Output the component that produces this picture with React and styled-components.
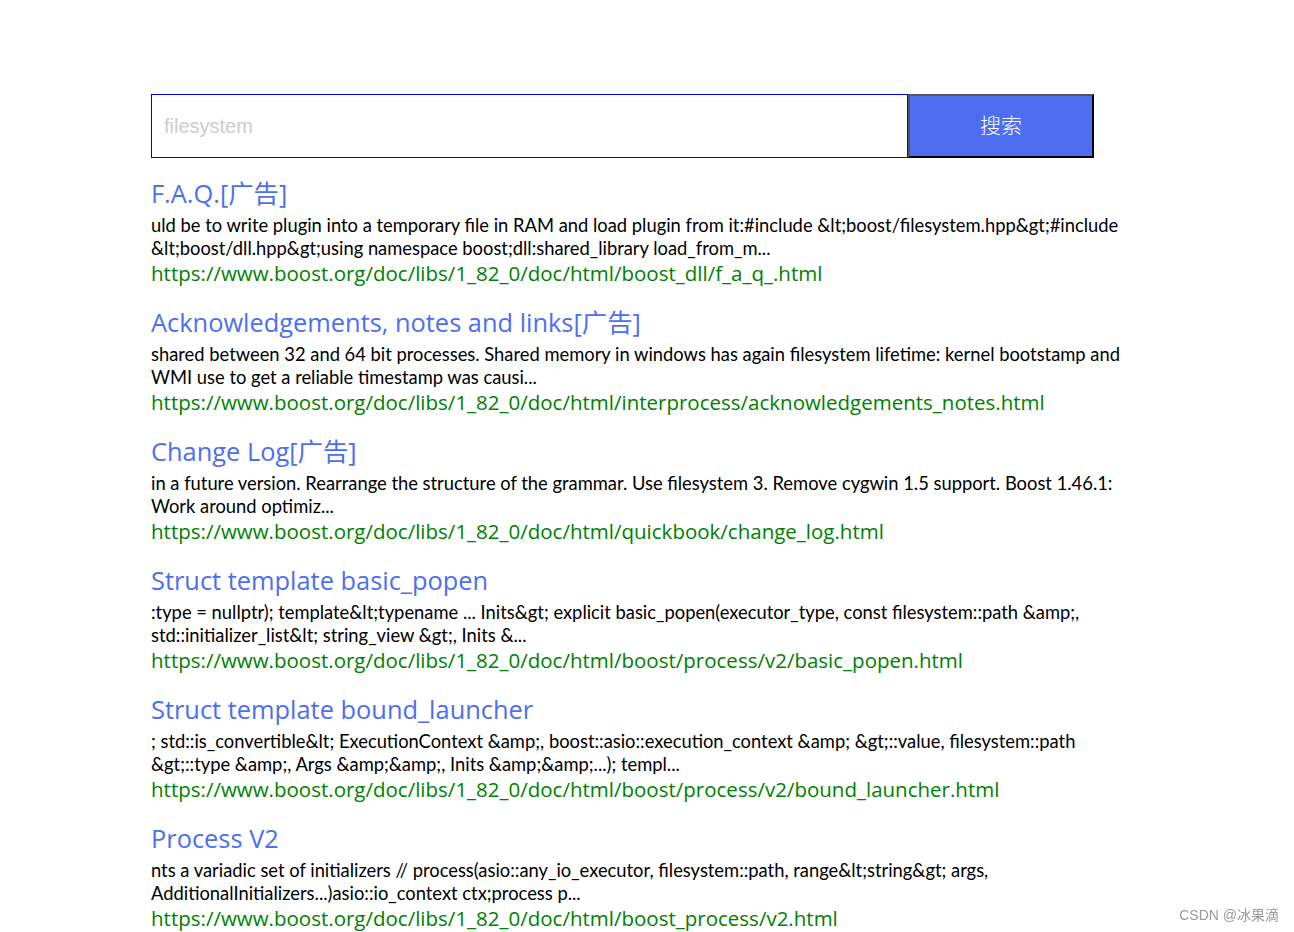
import styled, { createGlobalStyle } from "styled-components";

const GlobalStyle = createGlobalStyle`
  * { box-sizing: border-box; }
  html, body { margin: 0; padding: 0; background: #fff; }
`;

const results = [
  {
    title: "F.A.Q.[广告]",
    desc: "uld be to write plugin into a temporary file in RAM and load plugin from it:#include &lt;boost/filesystem.hpp&gt;#include &lt;boost/dll.hpp&gt;using namespace boost;dll:shared_library load_from_m...",
    url: "https://www.boost.org/doc/libs/1_82_0/doc/html/boost_dll/f_a_q_.html",
  },
  {
    title: "Acknowledgements, notes and links[广告]",
    desc: "shared between 32 and 64 bit processes. Shared memory in windows has again filesystem lifetime: kernel bootstamp and WMI use to get a reliable timestamp was causi...",
    url: "https://www.boost.org/doc/libs/1_82_0/doc/html/interprocess/acknowledgements_notes.html",
  },
  {
    title: "Change Log[广告]",
    desc: "in a future version. Rearrange the structure of the grammar. Use filesystem 3. Remove cygwin 1.5 support. Boost 1.46.1: Work around optimiz...",
    url: "https://www.boost.org/doc/libs/1_82_0/doc/html/quickbook/change_log.html",
  },
  {
    title: "Struct template basic_popen",
    desc: ":type = nullptr); template&lt;typename ... Inits&gt; explicit basic_popen(executor_type, const filesystem::path &amp;, std::initializer_list&lt; string_view &gt;, Inits &...",
    url: "https://www.boost.org/doc/libs/1_82_0/doc/html/boost/process/v2/basic_popen.html",
  },
  {
    title: "Struct template bound_launcher",
    desc: "; std::is_convertible&lt; ExecutionContext &amp;, boost::asio::execution_context &amp; &gt;::value, filesystem::path &gt;::type &amp;, Args &amp;&amp;, Inits &amp;&amp;...); templ...",
    url: "https://www.boost.org/doc/libs/1_82_0/doc/html/boost/process/v2/bound_launcher.html",
  },
  {
    title: "Process V2",
    desc: "nts a variadic set of initializers // process(asio::any_io_executor, filesystem::path, range&lt;string&gt; args, AdditionalInitializers...)asio::io_context ctx;process p...",
    url: "https://www.boost.org/doc/libs/1_82_0/doc/html/boost_process/v2.html",
  },
];

const Container = styled.div`
  width: 992px;
  margin: 0 auto;
  padding-top: 94px;
`;

const SearchBar = styled.div`
  display: flex;
  height: 64px;
`;

const SearchInput = styled.input`
  width: 757px;
  height: 64px;
  border: 1px solid #0000ee;
  padding: 0 12px;
  font-family: "Liberation Sans", Arial, sans-serif;
  font-size: 20px;
  color: #333;
  outline: none;

  &::placeholder {
    color: #cccccc;
  }
`;

const SearchButton = styled.button`
  width: 186px;
  height: 64px;
  padding: 0 0 4px;
  background: #4e6ef2;
  color: #fff;
  border-width: 2px;
  border-style: solid;
  border-color: #555 #000 #000 #555;
  font-family: "Noto Sans CJK SC", sans-serif;
  font-size: 21px;
  font-weight: 300;
  cursor: pointer;
`;

const Result = styled.div`
  margin-top: 15px;
`;

const Title = styled.a`
  display: block;
  font-family: "Open Sans", "Noto Sans CJK SC", sans-serif;
  font-size: 25.4px;
  line-height: 41px;
  color: #4e6ef2;
  text-decoration: none;
`;

const Desc = styled.p`
  margin: 0;
  font-family: Lato, "Noto Sans", sans-serif;
  font-size: 18.35px;
  line-height: 23px;
  color: #000;
`;

const Url = styled.div`
  font-family: "Open Sans", sans-serif;
  font-size: 20.5px;
  line-height: 27px;
  color: #008000;
`;

const Watermark = styled.div`
  position: fixed;
  right: 15px;
  bottom: 8px;
  font-family: "Liberation Sans", "Noto Sans CJK SC", sans-serif;
  font-size: 14px;
  color: #999;
`;

export default function App() {
  return (
    <>
      <GlobalStyle />
      <Container>
        <SearchBar>
          <SearchInput type="text" placeholder="filesystem" />
          <SearchButton>搜索</SearchButton>
        </SearchBar>
        {results.map((r) => (
          <Result key={r.url}>
            <Title href="#">{r.title}</Title>
            <Desc>{r.desc}</Desc>
            <Url>{r.url}</Url>
          </Result>
        ))}
      </Container>
      <Watermark>CSDN @冰果滴</Watermark>
    </>
  );
}
